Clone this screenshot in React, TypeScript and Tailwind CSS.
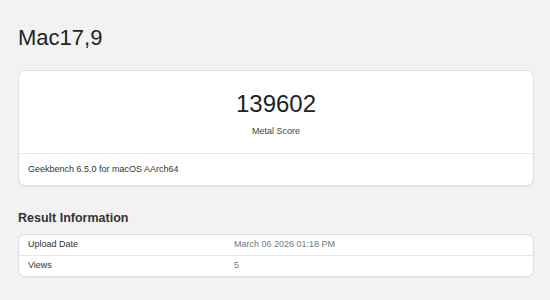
export default function App() {
  return (
    <div className="min-h-screen w-full bg-[#f2f2f2] pl-[18px] pr-[16px] text-[#333] font-['Liberation_Sans',Arial,sans-serif]">
      <h1 className="pt-[24px] text-[22px] leading-[28px] font-normal text-[#222]">Mac17,9</h1>

      {/* score card */}
      <div className="mt-[18px] rounded-[7px] border border-[#dedede] bg-white shadow-[0_1px_1px_rgba(0,0,0,0.04)]">
        <div className="flex flex-col items-center pt-[19px] pb-[16px] border-b border-[#e5e5e5]">
          <div className="text-[24px] leading-[28px] text-[#222]">139602</div>
          <div className="mt-[7px] text-[9px] leading-[12px] text-[#444]">Metal Score</div>
        </div>
        <div className="flex h-[31px] items-center px-[9px] text-[9px] text-[#333]">
          Geekbench 6.5.0 for macOS AArch64
        </div>
      </div>

      <h2 className="mt-[24px] mb-[8px] text-[12.5px] leading-[16px] font-bold text-[#333]">Result Information</h2>

      <div className="rounded-[7px] border border-[#dedede] bg-white text-[9px] shadow-[0_1px_1px_rgba(0,0,0,0.04)]">
        <div className="flex h-[21px] items-center border-b border-[#e5e5e5]">
          <div className="w-[215px] pl-[9px] text-[#333]">Upload Date</div>
          <div className="text-[#777]">March 06 2026 01:18 PM</div>
        </div>
        <div className="flex h-[20px] items-center">
          <div className="w-[215px] pl-[9px] text-[#333]">Views</div>
          <div className="text-[#777]">5</div>
        </div>
      </div>
    </div>
  );
}
